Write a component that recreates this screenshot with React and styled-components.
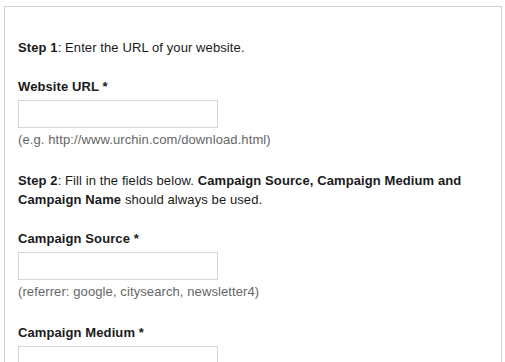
import React from "react";
import styled, { createGlobalStyle } from "styled-components";

const Global = createGlobalStyle`
  html, body {
    margin: 0;
    padding: 0;
    background: #ffffff;
    overflow: hidden;
  }
  body {
    font-family: "Liberation Sans", Arial, Helvetica, sans-serif;
    font-size: 13px;
    line-height: 19px;
    letter-spacing: 0.1px;
    color: #1a1a1a;
  }
`;

const Page = styled.div`
  padding: 6px 3px 0 4px;
`;

const Panel = styled.div`
  border: 1px solid #cfcfcf;
  padding: 31px 13px 40px 13px;
  min-height: 420px;
`;

const Para = styled.p`
  margin: 0 0 20px 0;
`;

const Field = styled.div`
  display: flex;
  flex-direction: column;
  align-items: flex-start;
  margin-bottom: 22px;
`;

const Label = styled.label`
  font-weight: bold;
  margin-bottom: 4px;
`;

const Input = styled.input`
  box-sizing: border-box;
  width: 200px;
  height: 28px;
  margin: 0;
  padding: 4px 6px;
  border: 1px solid #d6d6d6;
  border-radius: 0;
  background: #fff;
  font: inherit;
  outline: none;
`;

const Hint = styled.span`
  margin-top: 2px;
  color: #666666;
`;

const fields = [
  { label: "Campaign Source *", hint: "(referrer: google, citysearch, newsletter4)" },
  { label: "Campaign Medium *", hint: "(marketing medium: cpc, banner, email)" },
  { label: "Campaign Term", hint: "(identify the paid keywords)" },
];

export default function App() {
  return (
    <>
      <Global />
      <Page>
        <Panel>
          <Para>
            <b>Step 1</b>: Enter the URL of your website.
          </Para>
          <Field>
            <Label>Website URL *</Label>
            <Input type="text" />
            <Hint>(e.g. http://www.urchin.com/download.html)</Hint>
          </Field>
          <Para>
            <b>Step 2</b>: Fill in the fields below.{" "}
            <b>Campaign Source, Campaign Medium and Campaign Name</b> should
            always be used.
          </Para>
          {fields.map((f) => (
            <Field key={f.label}>
              <Label>{f.label}</Label>
              <Input type="text" />
              <Hint>{f.hint}</Hint>
            </Field>
          ))}
        </Panel>
      </Page>
    </>
  );
}
